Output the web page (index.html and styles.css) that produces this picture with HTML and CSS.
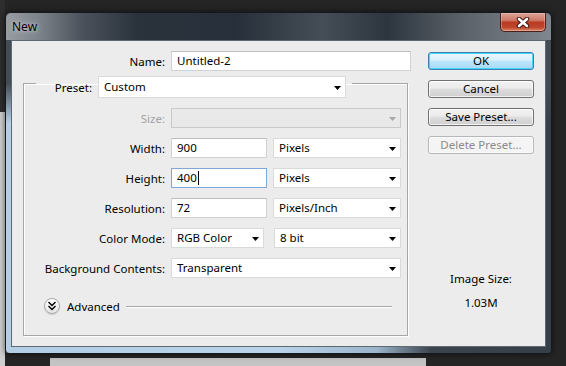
FILE: index.html
```html
<!DOCTYPE html>
<html lang="en">
<head>
    <meta charset="UTF-8">
    <meta name="viewport" content="width=device-width, initial-scale=1.0">
    <title>New</title>
    <link rel="stylesheet" href="styles.css">
</head>
<body>
    <div class="window">
        <div class="titlebar">
            <span class="title">New</span>
            <button class="close-button" aria-label="Close">
                <svg width="14" height="11" viewBox="0 0 14 11">
                    <path d="M3 2 L11 9 M11 2 L3 9" stroke="#3a1a14" stroke-width="4.6" stroke-linecap="round"/>
                    <path d="M3 2 L11 9 M11 2 L3 9" stroke="#ffffff" stroke-width="2.6" stroke-linecap="round"/>
                </svg>
            </button>
        </div>

        <div class="client">
            <div class="form">
                <div class="row name-row">
                    <label>Name:</label>
                    <div class="field name-field">Untitled-2</div>
                </div>

                <fieldset class="group">
                    <legend class="preset">
                        <label>Preset:</label>
                        <div class="dropdown preset-drop">Custom</div>
                    </legend>

                    <div class="row">
                        <label class="muted">Size:</label>
                        <div class="dropdown full disabled"></div>
                    </div>
                    <div class="row">
                        <label>Width:</label>
                        <div class="field num">900</div>
                        <div class="dropdown unit">Pixels</div>
                    </div>
                    <div class="row">
                        <label>Height:</label>
                        <div class="field num focused">400<span class="caret"></span></div>
                        <div class="dropdown unit">Pixels</div>
                    </div>
                    <div class="row">
                        <label>Resolution:</label>
                        <div class="field num">72</div>
                        <div class="dropdown unit">Pixels/Inch</div>
                    </div>
                    <div class="row">
                        <label>Color Mode:</label>
                        <div class="dropdown mode">RGB Color</div>
                        <div class="dropdown depth">8 bit</div>
                    </div>
                    <div class="row">
                        <label>Background Contents:</label>
                        <div class="dropdown full">Transparent</div>
                    </div>

                    <div class="advanced">
                        <span class="adv-icon">
                            <svg width="16" height="16" viewBox="0 0 16 16">
                                <path d="M4.5 4 L8 7.5 L11.5 4 M4.5 8 L8 11.5 L11.5 8" fill="none" stroke="#000" stroke-width="1.4"/>
                            </svg>
                        </span>
                        <span class="adv-label">Advanced</span>
                        <span class="rule"></span>
                    </div>
                </fieldset>
            </div>

            <div class="side">
                <button class="btn default">OK</button>
                <button class="btn">Cancel</button>
                <button class="btn">Save Preset...</button>
                <button class="btn" disabled>Delete Preset...</button>

                <div class="image-size">
                    <p>Image Size:</p>
                    <p>1.03M</p>
                </div>
            </div>
        </div>
    </div>
</body>
</html>
```

FILE: styles.css
```css
body {
    margin: 0;
    width: 566px;
    height: 366px;
    overflow: hidden;
    font-family: "Noto Sans", "Open Sans", sans-serif;
    font-size: 11.5px;
    color: #000;
    background:
        linear-gradient(#2e2e2e 0, #2e2e2e 112px, #cfcfcf 112px) 0 0 / 5px 100% no-repeat,
        linear-gradient(#c4c4c4, #c4c4c4) 50px 358px / 376px 8px no-repeat,
        #252525;
}

.window {
    margin: 12px 0 0 5px;
    width: 547px;
    height: 342px;
    box-sizing: border-box;
    border: 1px solid #15191d;
    border-radius: 6px 6px 4px 4px;
    display: flex;
    flex-direction: column;
    background:
        linear-gradient(to bottom, #434b55 0, #434b55 70px, rgba(67, 75, 85, 0) 110px),
        linear-gradient(to right, #b3cee5 0%, #bad3e8 50%, #9cb5ca 68%, #3b444e 78%, #363f49 100%);
    box-shadow: 0 0 6px rgba(0, 0, 0, 0.6);
}

.titlebar {
    height: 27px;
    display: flex;
    justify-content: space-between;
    align-items: flex-start;
    padding: 0 5px 0 6px;
    border-radius: 5px 5px 0 0;
    background: linear-gradient(to right, #969ca2 0%, #7d838a 6%, #4b525b 14%, #2a323c 24%, #27303a 42%, #454d56 58%, #2d353e 70%, #5b626a 84%, #80868d 100%);
}

.title {
    line-height: 27px;
    font-size: 12px;
    text-shadow: 0 0 6px #c4c8cc, 0 0 3px #c4c8cc;
}

.close-button {
    width: 46px;
    height: 19px;
    padding: 0;
    border: 1px solid #4a2019;
    border-top: none;
    border-radius: 0 0 5px 5px;
    display: flex;
    align-items: center;
    justify-content: center;
    background: linear-gradient(#d9a497 0%, #cf7a68 40%, #b93a22 52%, #c0472d 80%, #d98a6c 100%);
    box-shadow: inset 0 0 0 1px rgba(255, 220, 210, 0.35);
}

.client {
    flex: 1;
    margin: 0 5px 6px 5px;
    border: 1px solid #5e6974;
    background-color: #ececec;
    display: flex;
    gap: 17px;
    padding: 10px 11px 0 11px;
}

.form {
    width: 388px;
}

.row {
    display: flex;
    align-items: center;
    height: 20px;
}

.row label {
    width: 141px;
    margin-right: 6px;
    text-align: right;
    white-space: nowrap;
}

.name-row label {
    width: 142px;
}

label.muted {
    color: #a3a3a3;
}

.field,
.dropdown {
    height: 20px;
    box-sizing: border-box;
    background-color: #fff;
    line-height: 18px;
    padding-left: 5px;
    white-space: nowrap;
}

.field {
    border: 1px solid #d2d2d2;
    border-top-color: #bdbdbd;
}

.field.focused {
    border-color: #7ea9d6;
}

.caret {
    display: inline-block;
    width: 1px;
    height: 14px;
    margin-left: 1px;
    vertical-align: -3px;
    background-color: #000;
}

.name-field {
    width: 240px;
}

.num {
    width: 96px;
    margin-right: 6px;
}

.dropdown {
    position: relative;
    border: 1px solid #dadada;
}

.dropdown::after {
    content: "";
    position: absolute;
    right: 4px;
    top: 8px;
    width: 7px;
    height: 4px;
    background-color: #000;
    clip-path: polygon(0 0, 100% 0, 50% 100%);
}

.dropdown.disabled {
    background-color: #e9e9e9;
    border-color: #c9c9c9;
}

.dropdown.disabled::after {
    background-color: #a8a8a8;
}

.unit {
    width: 128px;
}

.full {
    width: 230px;
}

.mode {
    width: 93px;
    margin-right: 10px;
}

.depth {
    width: 127px;
}

.group {
    width: 385px;
    box-sizing: border-box;
    margin: -3px 0 0 0;
    padding: 10px 0 21px 0;
    min-width: 0;
    border: 1px solid #a6a6a6;
    box-shadow: 1px 1px 0 #fff, inset 1px 1px 0 #fff;
    display: flex;
    flex-direction: column;
    gap: 10px;
}

.preset {
    margin-left: 12px;
    padding: 8px 6px 0 6px;
    display: flex;
    align-items: center;
}

.preset label {
    width: 50px;
    margin-right: 6px;
    text-align: right;
}

.preset-drop {
    width: 248px;
    height: 22px;
    line-height: 20px;
}

.preset-drop::after {
    top: 9px;
}

.advanced {
    display: flex;
    align-items: center;
    height: 16px;
    margin-top: 10px;
    padding-left: 20px;
}

.adv-icon {
    width: 16px;
    height: 16px;
    box-sizing: border-box;
    border: 1px solid #a9a9a9;
    border-radius: 50%;
    background: linear-gradient(#ffffff, #e4e4e4);
    box-shadow: 0 1px 1px rgba(0, 0, 0, 0.15);
    display: flex;
    align-items: center;
    justify-content: center;
}

.adv-icon svg {
    margin: -1px;
}

.adv-label {
    margin-left: 7px;
}

.rule {
    flex: 1;
    height: 1px;
    margin: 1px 15px 0 6px;
    background-color: #a6a6a6;
    box-shadow: 0 1px 0 #fff;
}

.side {
    width: 106px;
    display: flex;
    flex-direction: column;
    gap: 10px;
    padding-top: 1px;
    padding-bottom: 35px;
}

.btn {
    height: 18px;
    padding: 0;
    font-family: inherit;
    font-size: 11.5px;
    line-height: 16px;
    color: #000;
    border: 1px solid #707070;
    border-radius: 3px;
    background: linear-gradient(#f2f2f2 0%, #ebebeb 45%, #dddddd 50%, #cfcfcf 100%);
    box-shadow: inset 0 0 0 1px rgba(255, 255, 255, 0.75);
}

.btn.default {
    border-color: #3c7fb1;
    background: linear-gradient(#eaf6fd 0%, #d9f0fc 45%, #bee6fd 50%, #a7d9f5 100%);
    box-shadow: inset 0 0 0 1px #48d4f8;
}

.btn:disabled {
    color: #8a8a8a;
    border-color: #b5b8ba;
    background: #f4f4f4;
    box-shadow: inset 0 0 0 1px #fbfbfb;
}

.image-size {
    margin-top: auto;
    text-align: center;
}

.image-size p {
    margin: 0;
    line-height: 16px;
}

.image-size p + p {
    margin-top: 8px;
}
```
